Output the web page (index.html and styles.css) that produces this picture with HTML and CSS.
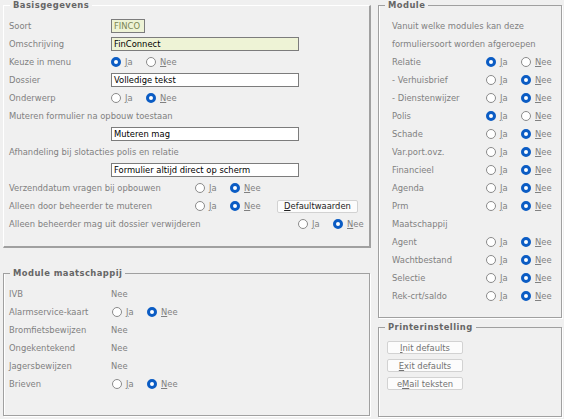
FILE: index.html
```html
<!DOCTYPE html>
<html>
<head>
<meta charset="utf-8">
<link rel="stylesheet" href="styles.css">
</head>
<body>
<div class="app">
  <div class="col-left">
    <fieldset class="basis">
      <legend>Basisgegevens</legend>
      <div class="content pad-basis">
      <div class="row"><span class="lbl">Soort</span><span class="field yellow short">FINCO</span></div>
      <div class="row"><span class="lbl">Omschrijving</span><span class="field yellow">FinConnect</span></div>
      <div class="row"><span class="lbl">Keuze in menu</span>
        <span class="radios"><span class="opt ja"><span class="dot on"></span><span><u>J</u>a</span></span><span class="opt"><span class="dot"></span><span><u>N</u>ee</span></span></span></div>
      <div class="row"><span class="lbl">Dossier</span><span class="field">Volledige tekst</span></div>
      <div class="row"><span class="lbl">Onderwerp</span>
        <span class="radios"><span class="opt ja"><span class="dot"></span><span><u>J</u>a</span></span><span class="opt"><span class="dot on"></span><span><u>N</u>ee</span></span></span></div>
      <div class="row"><span>Muteren formulier na opbouw toestaan</span></div>
      <div class="row indent"><span class="field">Muteren mag</span></div>
      <div class="row"><span>Afhandeling bij slotacties polis en relatie</span></div>
      <div class="row indent"><span class="field">Formulier altijd direct op scherm</span></div>
      <div class="row"><span class="lbl wide">Verzenddatum vragen bij opbouwen</span>
        <span class="radios"><span class="opt ja"><span class="dot"></span><span><u>J</u>a</span></span><span class="opt"><span class="dot on"></span><span><u>N</u>ee</span></span></span></div>
      <div class="row"><span class="lbl wide">Alleen door beheerder te muteren</span>
        <span class="radios fixed"><span class="opt ja"><span class="dot"></span><span><u>J</u>a</span></span><span class="opt"><span class="dot on"></span><span><u>N</u>ee</span></span></span>
        <span class="btn dark defaults"><u>D</u>efaultwaarden</span></div>
      <div class="row"><span class="lbl wider">Alleen beheerder mag uit dossier verwijderen</span>
        <span class="radios"><span class="opt ja"><span class="dot"></span><span><u>J</u>a</span></span><span class="opt"><span class="dot on"></span><span><u>N</u>ee</span></span></span></div>
      </div>
    </fieldset>

    <fieldset class="group mm">
      <legend>Module maatschappij</legend>
      <div class="content pad-mm">
      <div class="row"><span class="lbl">IVB</span><span>Nee</span></div>
      <div class="row"><span class="lbl">Alarmservice-kaart</span>
        <span class="radios nudge"><span class="opt ja"><span class="dot"></span><span><u>J</u>a</span></span><span class="opt"><span class="dot on"></span><span><u>N</u>ee</span></span></span></div>
      <div class="row"><span class="lbl">Bromfietsbewijzen</span><span>Nee</span></div>
      <div class="row"><span class="lbl">Ongekentekend</span><span>Nee</span></div>
      <div class="row"><span class="lbl">Jagersbewijzen</span><span>Nee</span></div>
      <div class="row"><span class="lbl">Brieven</span>
        <span class="radios nudge"><span class="opt ja"><span class="dot"></span><span><u>J</u>a</span></span><span class="opt"><span class="dot on"></span><span><u>N</u>ee</span></span></span></div>
      </div>
    </fieldset>
  </div>

  <div class="col-right">
    <fieldset class="group module">
      <legend>Module</legend>
      <div class="content pad-module">
      <div class="row"><span>Vanuit welke modules kan deze</span></div>
      <div class="row"><span>formuliersoort worden afgeroepen</span></div>
      <div class="row"><span class="mlbl">Relatie</span><span class="radios"><span class="opt ja"><span class="dot on"></span><span><u>J</u>a</span></span><span class="opt"><span class="dot"></span><span><u>N</u>ee</span></span></span></div>
      <div class="row"><span class="mlbl">- Verhuisbrief</span><span class="radios"><span class="opt ja"><span class="dot"></span><span><u>J</u>a</span></span><span class="opt"><span class="dot on"></span><span><u>N</u>ee</span></span></span></div>
      <div class="row"><span class="mlbl">- Dienstenwijzer</span><span class="radios"><span class="opt ja"><span class="dot"></span><span><u>J</u>a</span></span><span class="opt"><span class="dot on"></span><span><u>N</u>ee</span></span></span></div>
      <div class="row"><span class="mlbl">Polis</span><span class="radios"><span class="opt ja"><span class="dot on"></span><span><u>J</u>a</span></span><span class="opt"><span class="dot"></span><span><u>N</u>ee</span></span></span></div>
      <div class="row"><span class="mlbl">Schade</span><span class="radios"><span class="opt ja"><span class="dot"></span><span><u>J</u>a</span></span><span class="opt"><span class="dot on"></span><span><u>N</u>ee</span></span></span></div>
      <div class="row"><span class="mlbl">Var.port.ovz.</span><span class="radios"><span class="opt ja"><span class="dot"></span><span><u>J</u>a</span></span><span class="opt"><span class="dot on"></span><span><u>N</u>ee</span></span></span></div>
      <div class="row"><span class="mlbl">Financieel</span><span class="radios"><span class="opt ja"><span class="dot"></span><span><u>J</u>a</span></span><span class="opt"><span class="dot on"></span><span><u>N</u>ee</span></span></span></div>
      <div class="row"><span class="mlbl">Agenda</span><span class="radios"><span class="opt ja"><span class="dot"></span><span><u>J</u>a</span></span><span class="opt"><span class="dot on"></span><span><u>N</u>ee</span></span></span></div>
      <div class="row"><span class="mlbl">Prm</span><span class="radios"><span class="opt ja"><span class="dot"></span><span><u>J</u>a</span></span><span class="opt"><span class="dot on"></span><span><u>N</u>ee</span></span></span></div>
      <div class="row"><span class="mlbl">Maatschappij</span></div>
      <div class="row"><span class="mlbl">Agent</span><span class="radios"><span class="opt ja"><span class="dot"></span><span><u>J</u>a</span></span><span class="opt"><span class="dot on"></span><span><u>N</u>ee</span></span></span></div>
      <div class="row"><span class="mlbl">Wachtbestand</span><span class="radios"><span class="opt ja"><span class="dot"></span><span><u>J</u>a</span></span><span class="opt"><span class="dot on"></span><span><u>N</u>ee</span></span></span></div>
      <div class="row"><span class="mlbl">Selectie</span><span class="radios"><span class="opt ja"><span class="dot"></span><span><u>J</u>a</span></span><span class="opt"><span class="dot on"></span><span><u>N</u>ee</span></span></span></div>
      <div class="row"><span class="mlbl">Rek-crt/saldo</span><span class="radios"><span class="opt ja"><span class="dot"></span><span><u>J</u>a</span></span><span class="opt"><span class="dot on"></span><span><u>N</u>ee</span></span></span></div>
      </div>
    </fieldset>

    <fieldset class="group printer">
      <legend>Printerinstelling</legend>
      <div class="content btns">
        <span class="btn pbtn"><u>I</u>nit defaults</span>
        <span class="btn pbtn"><u>E</u>xit defaults</span>
        <span class="btn pbtn">e<u>M</u>ail teksten</span>
      </div>
    </fieldset>
  </div>
</div>
</body>
</html>
```

FILE: styles.css
```css
* { box-sizing: border-box; }

body {
  margin: 0;
  width: 564px;
  height: 419px;
  overflow: hidden;
  background: #f0f0f0;
  font-family: "DejaVu Sans", Verdana, sans-serif;
  font-size: 8.4px;
  color: #808080;
}

.app {
  display: flex;
  padding-left: 3px;
}

.col-left {
  width: 368px;
  display: flex;
  flex-direction: column;
}

.col-right {
  width: 184px;
  margin-left: 7px;
  display: flex;
  flex-direction: column;
}

fieldset {
  margin: 0;
  padding: 0;
  min-width: 0;
}

legend {
  margin-left: 6px;
  padding: 0 3px;
  height: 11px;
  line-height: 11px;
  font-weight: bold;
  color: #666666;
  letter-spacing: 0.45px;
}

.basis {
  width: 368px;
  height: 248px;
  border-style: solid;
  border-width: 1px 2px 2px 1px;
  border-color: #ffffff #a0a0a0 #a0a0a0 #ffffff;
}

.group {
  border: 1px solid #a0a0a0;
  box-shadow: 1px 1px 0 #ffffff, inset 1px 0 0 #ffffff;
}

.mm {
  width: 367px;
  height: 148px;
  margin-top: 20px;
}

.module {
  width: 184px;
  height: 318px;
}

.printer {
  width: 184px;
  height: 95px;
  margin-top: 4px;
}

.pad-basis { padding: 6px 0 0 5px; }
.pad-mm { padding: 6px 0 0 5px; }
.pad-module { padding: 6px 0 0 13px; }

.row {
  display: flex;
  align-items: center;
  height: 18px;
  white-space: nowrap;
}

.row.indent { padding-left: 102px; }

.lbl { width: 102px; flex: none; }
.lbl.wide { width: 186px; }
.lbl.wider { width: 289px; }
.mlbl { width: 94px; flex: none; }

.field {
  display: block;
  width: 188px;
  height: 14px;
  border: 1px solid #7c7c7c;
  background: #ffffff;
  color: #000000;
  padding-left: 2px;
  line-height: 12px;
}

.field.yellow { background: #eef3d6; }
.field.short { width: 34px; color: #7a8452; }

.radios { display: flex; align-items: center; }
.radios.fixed { width: 70px; flex: none; }
.radios.nudge { margin-left: 1px; }

.opt {
  display: flex;
  align-items: center;
  gap: 4px;
}

.opt.ja { width: 35px; flex: none; }

.dot {
  width: 10px;
  height: 10px;
  flex: none;
  border-radius: 50%;
  border: 1px solid #8a8a8a;
  background: #ffffff;
}

.dot.on { border: 3px solid #0b5cc4; }

.btn {
  display: flex;
  align-items: center;
  justify-content: center;
  height: 13px;
  background: #fcfcfc;
  border: 1px solid #d2d2d2;
  border-radius: 2px;
}

.btn.dark { color: #222222; }

.defaults {
  width: 81px;
  margin-left: 12px;
}

.btns {
  display: flex;
  flex-direction: column;
  gap: 5px;
  padding: 8px 0 0 8px;
}

.pbtn {
  width: 76px;
  color: #727272;
}
```
